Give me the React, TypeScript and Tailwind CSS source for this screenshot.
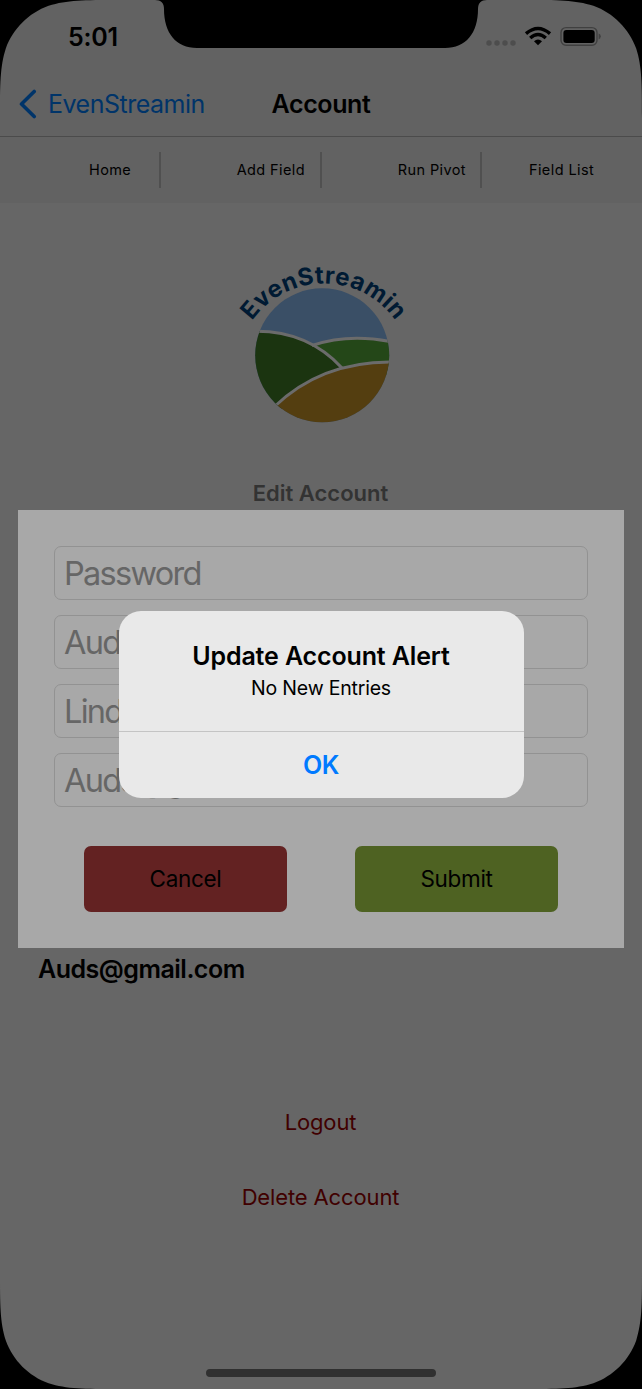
import React from "react";

function StatusBar() {
  return (
    <div className="flex h-[72px] items-start justify-between">
      <span className="ml-[68px] mt-[21px] text-[25px] font-semibold leading-[32px] tracking-[-0.2px]">5:01</span>
      <svg className="mr-[41px] mt-[26px]" width="115" height="22" viewBox="0 0 115 22">
        <g fill="#4d4d4d">
          <circle cx="3" cy="17" r="2.7" />
          <circle cx="11" cy="17" r="2.7" />
          <circle cx="19" cy="17" r="2.7" />
          <circle cx="27" cy="17" r="2.7" />
        </g>
        <g fill="none" stroke="#000" strokeWidth="3.4">
          <path d="M40 7.6 Q52 -2.6 64 7.6" />
          <path d="M44.2 12 Q52 5.2 59.8 12" />
        </g>
        <path d="M52 19.2 L48 15.2 Q52 11.6 56 15.2 Z" />
        <rect x="75" y="1.6" width="36" height="17.6" rx="5" fill="none" stroke="#404040" strokeWidth="1.4" />
        <rect x="77.4" y="4" width="31.3" height="13" rx="3" />
        <path d="M112.6 7.4 Q114.8 8 114.8 10.3 Q114.8 12.6 112.6 13.4 Z" fill="#404040" />
      </svg>
    </div>
  );
}

function NavBar() {
  return (
    <header className="grid h-[65px] grid-cols-3 items-center border-b border-[#4b4b4b]">
      <div className="flex items-center pl-[19px] text-[#003469]">
        <svg width="18" height="30" viewBox="0 0 18 30" fill="none" stroke="currentColor" strokeWidth="3.6" strokeLinecap="round" strokeLinejoin="round">
          <path d="M15.2 2.5 L2.5 15 L15.2 27.5" />
        </svg>
        <span className="ml-[11px] pt-[1px] text-[25px] tracking-[-0.5px]">EvenStreamin</span>
      </div>
      <h1 className="pt-[1px] text-center text-[25px] font-semibold tracking-[-0.4px]">Account</h1>
    </header>
  );
}

function Tabs() {
  return (
    <nav className="flex h-[66px] items-center bg-[#626262] text-[14.5px] tracking-[0.4px]">
      <div className="flex h-[36px] w-[161px] items-center border-r-2 border-[#505050] pl-[89px]">Home</div>
      <div className="flex h-[36px] w-[161px] items-center justify-end border-r-2 border-[#505050] pr-[15px]">Add Field</div>
      <div className="flex h-[36px] w-[160px] items-center justify-end border-r-2 border-[#505050] pr-[14px]">Run Pivot</div>
      <div className="pl-[47px]">Field List</div>
    </nav>
  );
}

function Logo() {
  return (
    <svg className="mx-auto mt-[47px] block" width="202" height="190" viewBox="0 0 202 190">
      <defs>
        <clipPath id="disc">
          <circle cx="102.2" cy="105.3" r="67" />
        </clipPath>
        <path id="arc" d="M26.500 79.9 A87.6 87.6 0 0 1 181.100 79.9" />
      </defs>
      <g clipPath="url(#disc)">
        <rect x="30" y="30" width="150" height="150" fill="#3a4f66" />
        <path d="M93 96 Q130 82 175 92 V125 H120 Z" fill="#244718" />
        <path d="M30 81 Q84 78 122 118 L60 160 H30 Z" fill="#1b3410" />
        <path d="M56 156 Q103 111 175 112 V180 H56 Z" fill="#543e10" />
        <g fill="none" stroke="#6b6b6b" strokeWidth="3">
          <path d="M92 95.5 Q129 83 172 92" />
          <path d="M30 81.5 Q86 79 122 118" />
          <path d="M54 157 Q102 110.5 175 112" />
        </g>
      </g>
      <text fill="#001a33" fontFamily="Inter, sans-serif" fontSize="24" fontWeight="700" letterSpacing="0.4">
        <textPath href="#arc" startOffset="50%" textAnchor="middle">EvenStreamin</textPath>
      </text>
    </svg>
  );
}

function EditForm() {
  return (
    <form className="mx-[18px] h-[438px] bg-[#a8a8a8] px-[36px] pt-[36px]">
      <div className="flex flex-col gap-[15px] text-[32.5px] tracking-[-1.7px] text-[#666]">
        {["Password", "Auds", "Lindsay", "Auds@gmail.com"].map((label) => (
          <div key={label} className="flex h-[54px] items-center rounded-[7px] border border-[#929292] pl-[9px] pt-[2px]">
            {label}
          </div>
        ))}
      </div>
      <div className="mt-[39px] flex justify-between px-[30px] text-[22.5px] tracking-[-0.3px]">
        <button type="button" className="h-[66px] w-[203px] rounded-[7px] bg-[#632222]">Cancel</button>
        <button type="button" className="h-[66px] w-[203px] rounded-[7px] bg-[#4e6222]">Submit</button>
      </div>
    </form>
  );
}

function Alert() {
  return (
    <div role="alertdialog" className="absolute left-[118.5px] top-[611px] flex h-[186.5px] w-[405px] flex-col overflow-hidden rounded-[22px] bg-[#e9e9e9] text-center">
      <div className="h-[121px] border-b border-[#c4c4c4] pt-[29px]">
        <h2 className="text-[25px] font-semibold leading-[32px] tracking-[-0.13px]">Update Account Alert</h2>
        <p className="text-[19.5px] leading-[32px] tracking-[-0.2px]">No New Entries</p>
      </div>
      <button type="button" className="flex-1 pt-[2px] text-[25px] font-semibold tracking-[-0.4px] text-[#007aff]">OK</button>
    </div>
  );
}

function DeviceFrame() {
  return (
    <svg className="pointer-events-none absolute inset-0" width="642" height="1389" viewBox="0 0 642 1389">
      <path d="M155 0 C161 0 164 3 164 9 C164 33 176 48 197 48 H445 C466 48 478 33 478 9 C478 3 481 0 487 0 Z" />
      <path id="corner" d="M0 0 H118 C84 0 67 0 48.6 5.800 C28.700 13 13 28.700 5.800 48.6 C0 67 0 84 0 118 Z" />
      <use href="#corner" transform="translate(642 0) scale(-1 1)" />
      <use href="#corner" transform="translate(0 1389) scale(1 -1)" />
      <use href="#corner" transform="translate(642 1389) scale(-1 -1)" />
    </svg>
  );
}

export default function App() {
  return (
    <div className="relative h-[1389px] w-[642px] overflow-hidden bg-[#666] font-['Inter',sans-serif] text-black">
      <div className="bg-[#626262]">
        <StatusBar />
        <NavBar />
      </div>
      <Tabs />
      <Logo />
      <h2 className="mt-[37px] mb-[1px] h-[32px] pr-[1px] text-center text-[22px] font-semibold leading-[32px] text-[#333]">Edit Account</h2>
      <EditForm />
      <p className="ml-[38px] mt-[5px] text-[25px] font-semibold leading-[32px] tracking-[-0.5px]">Auds@gmail.com</p>
      <div className="mt-[121px] flex flex-col items-center gap-[43px] pr-[1px] text-[22px] leading-[32px] tracking-[-0.13px] text-[#400000]">
        <button type="button">Logout</button>
        <button type="button">Delete Account</button>
      </div>
      <div className="mx-auto mt-[156px] h-[8px] w-[230px] rounded-full bg-[#303030]" />
      <Alert />
      <DeviceFrame />
    </div>
  );
}
